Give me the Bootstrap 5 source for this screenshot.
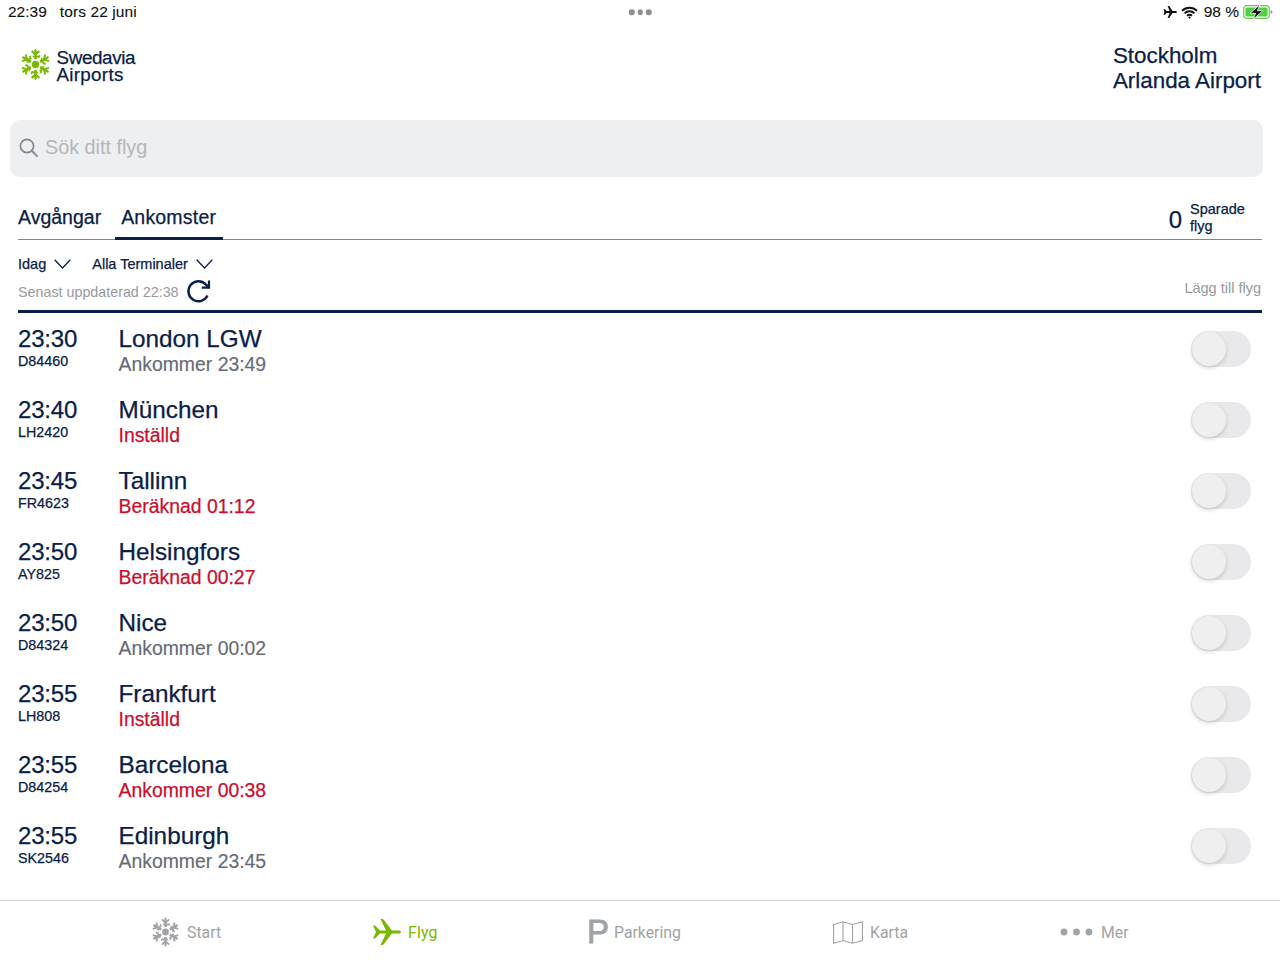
<!DOCTYPE html>
<html lang="sv">
<head>
<meta charset="utf-8">
<title>Swedavia Airports</title>
<link href="https://cdn.jsdelivr.net/npm/bootstrap@5.3.0/dist/css/bootstrap.min.css" rel="stylesheet">
<style>
html,body{height:960px;overflow:hidden;background:#fff}
body{font-family:"Liberation Sans",Arial,sans-serif;color:#0a2046}
.screen{height:960px;-webkit-text-stroke:.25px currentColor}
.statusbar{height:24px;padding:0 7px 0 8px;font-size:15.5px;color:#111;line-height:24px;-webkit-text-stroke:.1px currentColor}
.statusbar .sdate{margin-left:13px;letter-spacing:.1px}
.dots3{gap:3px}
.dots3 i{width:5.5px;height:5.5px;border-radius:50%;background:#8e8e93;display:block}
.wifi{margin-right:2px}
.headbar{height:96px;padding:0 19px 0 19.500px}
.headleft{margin-top:-14px}
.brand{font-size:18.8px;line-height:17px;letter-spacing:-.35px;margin-left:6px;margin-top:1px}
.brand2{letter-spacing:.3px}
.airport{font-size:22.4px;line-height:25px;margin-top:-8px}
.logobox{margin-top:-1px}
.searchbox{margin-left:10px;margin-right:17px;height:57px;background:#eeeff1;border-radius:10px;color:#b4b6ba;font-size:19.8px;padding:0 0 1px 9px;gap:6px;-webkit-text-stroke:0}
.tabsbar{margin:0 18px;height:63px;border-bottom:1px solid #7d8797}
.tabitem{font-size:19.5px;line-height:24px;padding:6px 7px 11px;border-bottom:3px solid transparent;margin-bottom:-1px;height:41px}
.tabitem.first{padding-left:0;padding-right:6px;margin-right:8px}
.tabitem.on{border-bottom-color:#0a2046;padding-left:6px;padding-right:7px;letter-spacing:.2px}
.savedn{font-size:24px;line-height:24px;margin-top:4px}
.savedt{font-size:14.5px;line-height:17px;margin-left:8px;width:72px;margin-top:1px}
.filterbar{margin:0 18px;height:73px;border-bottom:3px solid #0a2046}
.filters{font-size:14.5px;line-height:18px;padding-top:15px}
.filters .fgroup{margin-right:21px;gap:8px}
.updated{font-size:14.3px;color:#97999d;gap:7px;margin-top:6px;line-height:24px;-webkit-text-stroke:0}
.addlabel{font-size:14.5px;color:#97999d;padding-top:39px;line-height:18px;padding-right:1px;-webkit-text-stroke:0}
.rowflight{height:71px;margin:0 18px;padding-top:11px}
.timecol{width:100.5px}
.ftime{font-size:24px;line-height:29px;letter-spacing:-.2px}
.fno{font-size:14.3px;line-height:17px}
.fcity{font-size:24.3px;line-height:29px}
.fstat{font-size:19.4px;line-height:22px}
.fstat.grey{color:#656b75;-webkit-text-stroke:.15px currentColor}
.fstat.red{color:#c8102e}
.toggle{width:60px;height:36px;border-radius:18px;background:#e9e9eb;margin:7px 11px 0 0;position:relative}
.toggle::after{content:"";position:absolute;left:1px;top:1px;width:34px;height:34px;border-radius:50%;background:#efeff0;box-shadow:0 2px 4px rgba(0,0,0,.16)}
.tabbar{position:fixed;left:0;right:0;top:900px;height:60px;border-top:1px solid #d2d2d4;background:#fff;font-family:Roboto,sans-serif;font-size:15.8px;color:#a1a3a6}
.tabbar .titem{position:absolute;top:0;height:60px;display:flex;align-items:center;gap:7px}
.tabbar .titem span{position:relative;top:2px}
.tabbar .titem svg{position:relative;top:1px}
.tabbar .titem.on{color:#78b800}
.tabbar .titem.on span{letter-spacing:.2px}
.tabbar .titem span.pglyph{font-family:"Liberation Sans",sans-serif;font-size:33px;line-height:1;-webkit-text-stroke:.9px currentColor;top:0;margin-right:-1px;margin-left:-1px;letter-spacing:-1px}
</style>
</head>
<body>
<svg width="0" height="0" class="d-block" style="position:absolute">
<defs>
<g id="flake">
<g id="arm">
<path d="M-1.3 -5.8V-15.8L0 -17L1.3 -15.8V-5.8Z"/>
<path d="M-1 -10.2L-5 -14L-3.5 -15.5L0 -12.3L3.5 -15.5L5 -14L1 -10.2Z"/>
<path d="M-1 -6.8L-3.4 -9L-2.3 -10.2L0 -8.3L2.3 -10.2L3.4 -9L1 -6.8Z"/>
<path d="M-7.2 -8.8L-5.3 -9.8L-4.2 -6.6L-5.6 -5.4Z"/>
</g>
<use href="#arm" transform="rotate(60)"/><use href="#arm" transform="rotate(120)"/><use href="#arm" transform="rotate(180)"/><use href="#arm" transform="rotate(240)"/><use href="#arm" transform="rotate(300)"/>
<circle r="4"/>
</g>
</defs>
</svg>
<div class="screen d-flex flex-column">
  <div class="statusbar d-flex align-items-center justify-content-between position-relative">
    <div><span>22:39</span><span class="sdate">tors 22 juni</span></div>
    <div class="dots3 d-flex position-absolute top-50 start-50 translate-middle"><i></i><i></i><i></i></div>
    <div class="d-flex align-items-center">
      <svg width="14" height="12" viewBox="0 0 14 12" fill="#111"><path d="M0.5 3.2L2 3.2L3.6 5L6.6 5L4.6 0L6.2 0L9.6 5L12.4 5C13.4 5 14 5.5 14 6S13.4 7 12.4 7L9.6 7L6.2 12L4.6 12L6.6 7L3.6 7L2 8.8L0.5 8.8L1.4 6Z"/></svg>
      <svg class="wifi ms-1" width="17" height="13" viewBox="0 0 17 13" fill="none" stroke="#111" stroke-width="2"><path d="M1 4.8A10.5 10.5 0 0 1 16 4.8"/><path d="M3.6 7.4A6.8 6.8 0 0 1 13.4 7.4"/><path d="M6.1 9.9A3.2 3.2 0 0 1 10.9 9.9"/><circle cx="8.5" cy="11.6" r=".7" fill="#111" stroke-width="1"/></svg>
      <span class="ms-1">98 %</span>
      <svg class="ms-1" width="30" height="16" viewBox="0 0 30 16"><rect x=".7" y="1.7" width="25.600" height="12.600" rx="3.2" fill="none" stroke="#6fc05a" stroke-width="1.2"/><rect x="2.400" y="3.400" width="22.200" height="9.200" rx="1.5" fill="#4fd13c"/><path d="M27.600 6V10C28.800 9.600 29.500 8.800 29.500 8S28.800 6.400 27.600 6Z" fill="#9a9a9a"/><path d="M17 0.500L7 9.300H12.700L10 15.500L20 6.700H14.300Z" fill="#111" stroke="#fff" stroke-width=".8"/></svg>
    </div>
  </div>

  <div class="headbar d-flex align-items-center justify-content-between">
    <div class="headleft d-flex align-items-center">
      <svg class="logobox" width="31" height="33" viewBox="-17 -17.5 34 35" fill="#78b800"><use href="#flake"/></svg>
      <div class="brand">Swedavia<br><span class="brand2">Airports</span></div>
    </div>
    <div class="airport">Stockholm<br>Arlanda Airport</div>
  </div>

  <div class="searchbox d-flex align-items-center">
    <svg width="20" height="20" viewBox="0 0 20 20" fill="none" stroke="#84878c" stroke-width="1.7"><circle cx="8" cy="8" r="6.6"/><path d="M12.8 12.8L18.6 18.6" stroke-width="2"/></svg>
    <span>Sök ditt flyg</span>
  </div>

  <div class="tabsbar d-flex align-items-end justify-content-between">
    <div class="d-flex">
      <div class="tabitem first">Avgångar</div>
      <div class="tabitem on">Ankomster</div>
    </div>
    <div class="d-flex align-items-center pb-1">
      <div class="savedn">0</div>
      <div class="savedt">Sparade flyg</div>
    </div>
  </div>

  <div class="filterbar d-flex justify-content-between">
    <div>
      <div class="filters d-flex">
        <div class="fgroup d-flex align-items-center">Idag
          <svg width="17" height="10" viewBox="0 0 17 10" fill="none" stroke="#0a2046" stroke-width="1.3"><path d="M.7 .8L8.5 9L16.3 .8"/></svg></div>
        <div class="fgroup d-flex align-items-center">Alla Terminaler
          <svg width="17" height="10" viewBox="0 0 17 10" fill="none" stroke="#0a2046" stroke-width="1.3"><path d="M.7 .8L8.5 9L16.3 .8"/></svg></div>
      </div>
      <div class="updated d-flex align-items-center">Senast uppdaterad 22:38
        <svg width="25" height="25" viewBox="0 0 25 25" fill="none" stroke="#0a2046" stroke-width="2.4"><path d="M21.5 16.5A10 10 0 1 1 19.5 5.2L22.5 8"/><path d="M23 1.5V8.7H15.8" stroke-width="2.2"/></svg>
      </div>
    </div>
    <div class="addlabel">Lägg till flyg</div>
  </div>

  <div class="flightlist">
    <div class="rowflight d-flex"><div class="timecol"><div class="ftime">23:30</div><div class="fno">D84460</div></div><div class="flex-grow-1"><div class="fcity">London LGW</div><div class="fstat grey">Ankommer 23:49</div></div><div class="toggle"></div></div>
    <div class="rowflight d-flex"><div class="timecol"><div class="ftime">23:40</div><div class="fno">LH2420</div></div><div class="flex-grow-1"><div class="fcity">München</div><div class="fstat red">Inställd</div></div><div class="toggle"></div></div>
    <div class="rowflight d-flex"><div class="timecol"><div class="ftime">23:45</div><div class="fno">FR4623</div></div><div class="flex-grow-1"><div class="fcity">Tallinn</div><div class="fstat red">Beräknad 01:12</div></div><div class="toggle"></div></div>
    <div class="rowflight d-flex"><div class="timecol"><div class="ftime">23:50</div><div class="fno">AY825</div></div><div class="flex-grow-1"><div class="fcity">Helsingfors</div><div class="fstat red">Beräknad 00:27</div></div><div class="toggle"></div></div>
    <div class="rowflight d-flex"><div class="timecol"><div class="ftime">23:50</div><div class="fno">D84324</div></div><div class="flex-grow-1"><div class="fcity">Nice</div><div class="fstat grey">Ankommer 00:02</div></div><div class="toggle"></div></div>
    <div class="rowflight d-flex"><div class="timecol"><div class="ftime">23:55</div><div class="fno">LH808</div></div><div class="flex-grow-1"><div class="fcity">Frankfurt</div><div class="fstat red">Inställd</div></div><div class="toggle"></div></div>
    <div class="rowflight d-flex"><div class="timecol"><div class="ftime">23:55</div><div class="fno">D84254</div></div><div class="flex-grow-1"><div class="fcity">Barcelona</div><div class="fstat red">Ankommer 00:38</div></div><div class="toggle"></div></div>
    <div class="rowflight d-flex"><div class="timecol"><div class="ftime">23:55</div><div class="fno">SK2546</div></div><div class="flex-grow-1"><div class="fcity">Edinburgh</div><div class="fstat grey">Ankommer 23:45</div></div><div class="toggle"></div></div>
  </div>
</div>

<div class="tabbar">
  <div class="titem" style="left:151px"><svg width="29" height="30" viewBox="-17 -17.5 34 35" fill="#a1a3a6"><use href="#flake"/></svg><span>Start</span></div>
  <div class="titem on" style="left:373px"><svg width="28" height="26" viewBox="0 0 28 26" fill="#78b800"><path d="M0 6.500L2 6.500L7 11.500H13L7.500 0H10L19 11.500H25.500C27 11.500 28 12.200 28 13S27 14.500 25.500 14.500H19L10 26H7.500L13 14.500H7L2 19.500H0L3 13Z"/></svg><span>Flyg</span></div>
  <div class="titem" style="left:588px"><span class="pglyph">P</span><span>Parkering</span></div>
  <div class="titem" style="left:833px"><svg width="30" height="23" viewBox="0 0 30 23" fill="none" stroke="#a1a3a6" stroke-width="1.1"><path d="M.6 3.500L10 .8L19.500 3.500L29.400 .8V19.500L19.500 22.200L10 19.500L.6 22.200ZM10 .8V19.500M19.500 3.500V22.200"/></svg><span>Karta</span></div>
  <div class="titem" style="left:1060px;gap:8px"><svg width="33" height="8" viewBox="0 0 33 8" fill="#a1a3a6"><circle cx="4" cy="4" r="3.400"/><circle cx="16.500" cy="4" r="3.400"/><circle cx="29" cy="4" r="3.400"/></svg><span>Mer</span></div>
</div>
</body>
</html>
